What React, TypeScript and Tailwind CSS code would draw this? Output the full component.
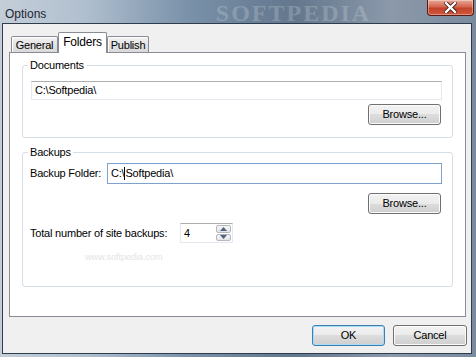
import React from 'react';

const ui = "font-['Liberation_Sans',Arial,sans-serif] text-[11px] tracking-[-0.2px] text-black";

function WinButton({ label, isDefault, className = '' }: { label: string; isDefault?: boolean; className?: string }) {
  return (
    <button
      className={`h-[21px] rounded-[3px] border ${
        isDefault
          ? 'border-[#3c7fb1] shadow-[inset_0_0_0_1px_#a8dcf8]'
          : 'border-[#707070] shadow-[inset_0_0_0_1px_#fbfbfb]'
      } bg-[linear-gradient(#f2f2f2_0%,#ebebeb_50%,#dddddd_50%,#cfcfcf_100%)] ${ui} leading-none ${className}`}
    >
      {label}
    </button>
  );
}

function Tab({ label, active, width }: { label: string; active?: boolean; width: string }) {
  if (active) {
    return (
      <div className={`${width} h-[21px] -mb-px relative z-10 bg-white border border-b-0 border-[#898c95] rounded-t-[2px] flex items-center justify-center pb-[3px] ${ui} text-[12px]`}>
        {label}
      </div>
    );
  }
  return (
    <div className={`${width} h-[16px] border border-b-0 border-[#898c95] rounded-t-[2px] bg-[linear-gradient(#f3f3f3,#e3e3e3_50%,#d9d9d9)] shadow-[inset_1px_1px_0_#fff] flex items-center justify-center pt-[1px] ${ui}`}>
      {label}
    </div>
  );
}

function TextBox({ value, focused, className = '', caretAfter }: { value: string; focused?: boolean; className?: string; caretAfter?: number }) {
  return (
    <div
      className={`flex items-center pl-[3px] bg-white border ${
        focused ? 'border-[#7da2ce]' : 'border-[#e3e9ef] border-t-[#abadb3]'
      } ${ui} ${className}`}
    >
      {caretAfter !== undefined ? (
        <>
          <span>{value.slice(0, caretAfter)}</span>
          <span className="w-px h-[13px] bg-black" />
          <span>{value.slice(caretAfter)}</span>
        </>
      ) : (
        value
      )}
    </div>
  );
}

function Spinner({ value }: { value: string }) {
  return (
    <div className={`w-[53px] h-[20px] flex items-center bg-white border border-[#e3e9ef] border-t-[#abadb3] ${ui}`}>
      <span className="flex-1 pl-[3px]">{value}</span>
      <div className="flex flex-col w-[15px] h-[16px] mr-[1px] gap-px">
        <div className="flex-1 flex items-center justify-center border border-[#b5b8bf] rounded-[2px] bg-[linear-gradient(#f7f7f7,#e4e4e4)]">
          <svg width="7" height="4" viewBox="0 0 7 4"><path d="M3.5 0 L7 4 L0 4 Z" fill="#4d6185" /></svg>
        </div>
        <div className="flex-1 flex items-center justify-center border border-[#b5b8bf] rounded-[2px] bg-[linear-gradient(#f7f7f7,#e4e4e4)]">
          <svg width="7" height="4" viewBox="0 0 7 4"><path d="M0 0 L7 0 L3.5 4 Z" fill="#4d6185" /></svg>
        </div>
      </div>
    </div>
  );
}

export default function App() {
  return (
    <div className="w-[476px] h-[357px] flex flex-col overflow-hidden bg-[linear-gradient(90deg,#c4ced9_0%,#b0bfcf_18%,#7890a8_40%,#63778d_62%,#8b99aa_82%,#7b8b9e_100%)]">
      {/* Title bar */}
      <div className="h-[23px] flex items-start">
        <div className="pl-[5px] pt-[5px] w-[120px] font-['Liberation_Sans',Arial,sans-serif] text-[12px] text-[#1c2633]">
          Options
        </div>
        <div className="flex-1 flex justify-center -mt-[5px] pl-[40px] font-['Liberation_Serif',serif] font-bold text-[24px] tracking-[2px] text-white/20">
          SOFTPEDIA
        </div>
        <div className="w-[47px] h-[16px] mr-[2px] rounded-b-[4px] border border-t-0 border-[#5a1b12] bg-[linear-gradient(#e9a99a_0%,#d4654f_45%,#c2432c_55%,#d0573c_100%)] flex items-center justify-center shadow-[inset_0_0_0_1px_rgba(255,255,255,0.35)]">
          <svg width="13" height="11" viewBox="0 0 13 11">
            <path d="M2 1 L11 10 M11 1 L2 10" stroke="#3a1a14" strokeWidth="4" strokeLinecap="square" />
            <path d="M2 1 L11 10 M11 1 L2 10" stroke="#fff" strokeWidth="2.4" strokeLinecap="square" />
          </svg>
        </div>
      </div>

      {/* Client area */}
      <div className="flex-1 ml-[2px] mr-[4px] mb-[3px] border border-[#2e3d4e] bg-[#f0f0f0] flex flex-col">
        {/* Tabs */}
        <div className="flex items-end ml-[8px] mt-[8px] h-[20px]">
          <Tab label="General" width="w-[47px]" />
          <Tab label="Folders" active width="w-[49px]" />
          <Tab label="Publish" width="w-[42px]" />
        </div>

        {/* Tab panel */}
        <div className="ml-[6px] w-[457px] h-[265px] border border-[#898c95] bg-white flex flex-col">
          <fieldset className="mx-[12px] mt-[6px] border border-[#d5dfe5] rounded-[3px] pl-[8px] pr-[10px] pt-[9px] pb-[12px] flex flex-col">
            <legend className={`-ml-[3px] px-[2px] leading-[13px] ${ui}`}>Documents</legend>
            <TextBox value="C:\Softpedia\" className="h-[19px] w-full" />
            <div className="flex justify-end mt-[4px]">
              <WinButton label="Browse..." className="w-[73px] mr-px" />
            </div>
          </fieldset>

          <fieldset className="mx-[12px] mt-[8px] border border-[#d5dfe5] rounded-[3px] pl-[8px] pr-[10px] pt-[4px] h-[141px] flex flex-col">
            <legend className={`-ml-[3px] px-[2px] leading-[13px] ${ui}`}>Backups</legend>
            <div className="flex items-center">
              <span className={`w-[77px] -ml-px ${ui}`}>Backup Folder:</span>
              <TextBox value="C:\Softpedia\" focused caretAfter={3} className="flex-1 h-[21px]" />
            </div>
            <div className="flex justify-end mt-[9px]">
              <WinButton label="Browse..." className="w-[73px] mr-px" />
            </div>
            <div className="flex items-center mt-[9px]">
              <span className={`w-[150px] -ml-px ${ui}`}>Total number of site backups:</span>
              <Spinner value="4" />
            </div>
            <div className="ml-[54px] mt-[8px] font-['Liberation_Sans',Arial,sans-serif] text-[9px] text-[#e4e4e4]">
              www.softpedia.com
            </div>
          </fieldset>
        </div>

        {/* Footer buttons */}
        <div className="flex justify-end gap-[8px] mt-[8px] pr-[4px]">
          <WinButton label="OK" isDefault className="w-[73px]" />
          <WinButton label="Cancel" className="w-[74px]" />
        </div>
      </div>
    </div>
  );
}
